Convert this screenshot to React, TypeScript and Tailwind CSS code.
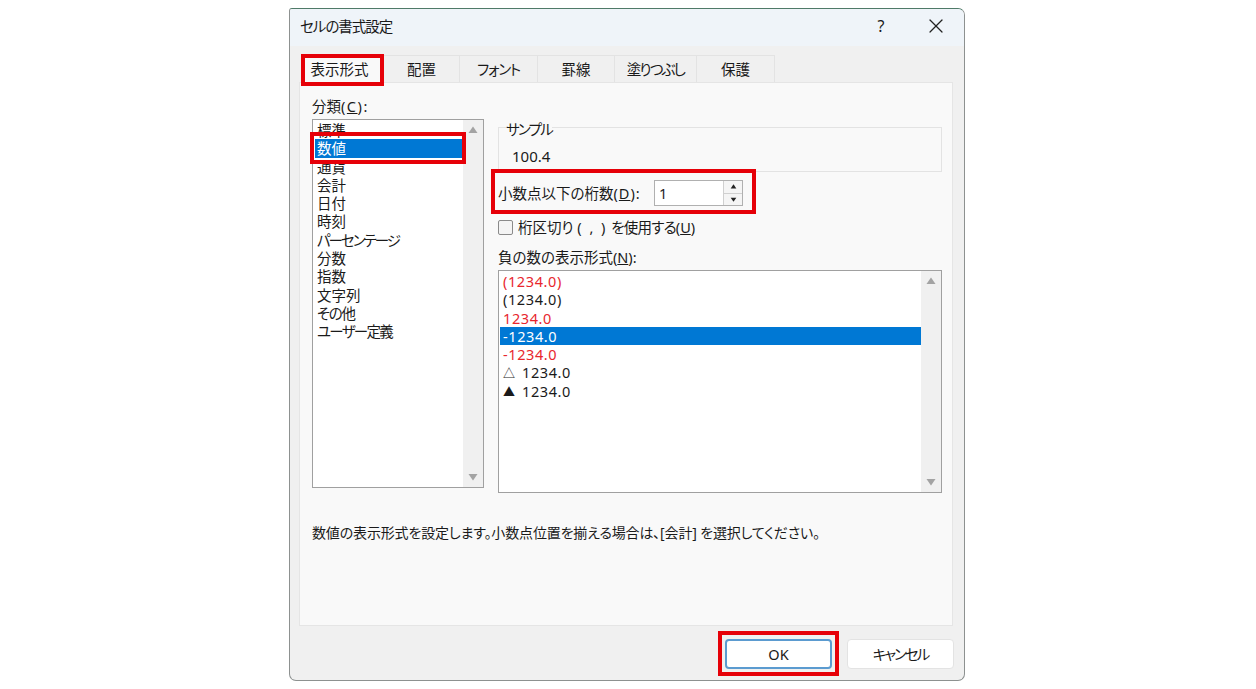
import { X } from "lucide-react";

const categories = [
  { label: "標準" },
  { label: "数値" },
  { label: "通貨" },
  { label: "会計" },
  { label: "日付" },
  { label: "時刻" },
  { label: "パーセンテージ", track: "tracking-[-2px]" },
  { label: "分数" },
  { label: "指数" },
  { label: "文字列" },
  { label: "その他", track: "tracking-[-1.3px]" },
  { label: "ユーザー定義", track: "tracking-[-1.7px]" },
];

const formats = [
  { label: "(1234.0)", color: "text-[#e8262d]" },
  { label: "(1234.0)", color: "text-[#1a1a1a]" },
  { label: "1234.0", color: "text-[#e8262d]" },
  { label: "-1234.0", color: "text-white bg-[#0078d4]" },
  { label: "-1234.0", color: "text-[#e8262d]" },
  { label: "1234.0", mark: "△", color: "text-[#1a1a1a]" },
  { label: "1234.0", mark: "▲", color: "text-[#1a1a1a]" },
];

const tabs = [
  { label: "配置", width: "w-[76px]" },
  { label: "フォント", width: "w-[78px] tracking-[-1.2px]" },
  { label: "罫線", width: "w-[77px]" },
  { label: "塗りつぶし", width: "w-[82px] tracking-[-1.8px]" },
  { label: "保護", width: "w-[78px]" },
];

const Arrow = ({ down, className }: { down?: boolean; className: string }) => (
  <svg viewBox="0 0 10 8" className={className} fill="currentColor">
    <path d={down ? "M0.5 1h9L5 7.5z" : "M0.5 7h9L5 0.5z"} />
  </svg>
);

const ScrollBar = () => (
  <div className="w-[20px] bg-[#f0f0f0] flex flex-col justify-between items-center py-[6px] text-[#a3a3a3]">
    <Arrow className="w-[10px] h-[8px]" />
    <Arrow down className="w-[10px] h-[8px]" />
  </div>
);

const RedBox = ({ className }: { className: string }) => (
  <div className={`absolute z-20 border-[4px] border-[#e60008] pointer-events-none ${className}`} />
);

const App = () => {
  return (
    <div className="w-[1256px] h-[689px] bg-white overflow-hidden pt-[8px] pl-[289px] text-[14.5px] leading-[20px] text-[#1a1a1a] [font-family:'Noto_Sans','Noto_Sans_CJK_JP',sans-serif] [font-feature-settings:'palt']">
      <div className="relative w-[676px] h-[673px] bg-[#f0f0f0] border border-[#8d9190] border-t-[#4f7a68] rounded-tl-[3px] rounded-tr-[7px] rounded-b-[7px] overflow-hidden">
        {/* title bar */}
        <div className="h-[37px] bg-[#eff4f9] flex items-center pl-[10px] pb-[3px]">
          <span className="flex-1 tracking-[-1px]">セルの書式設定</span>
          <span className="w-[20px] text-center text-[16px] mr-[33px]">?</span>
          <X size={24} strokeWidth={1.2} className="mr-[16px] text-[#222]" />
        </div>

        {/* tabs */}
        <div className="flex h-[28px] mt-[9px] pl-[14px] relative z-10">
          <div className="w-[80px] h-[28px] bg-[#f9f9f9] border border-b-0 border-[#e3e3e3] flex items-center justify-center pr-[9px] pb-[2px]">表示形式</div>
          {tabs.map((t) => (
            <div key={t.label} className={`${t.width} h-[27px] border-t border-r border-[#e3e3e3] flex items-center justify-center`}>
              {t.label}
            </div>
          ))}
        </div>

        {/* panel */}
        <div className="mx-[9px] w-[654px] h-[544px] -mt-[1px] bg-[#f9f9f9] border border-[#e5e5e5]">
          <div className="flex pl-[12px] pt-[13px] gap-[14px]">
            <div className="w-[172px]">
              <div className="h-[20px] mb-[3px]">
                分類<span className="tracking-[1.5px]">(<span className="underline">C</span>):</span>
              </div>
              <div className="h-[369px] bg-white border border-[#a0a0a0] flex overflow-hidden">
                <div className="flex-1 pt-[1px] pl-[2px] overflow-hidden">
                  {categories.map((c, i) => (
                    <div
                      key={c.label}
                      className={`h-[18.3px] leading-[18px] pl-[2px] ${c.track ?? ""} ${i === 1 ? "bg-[#0078d4] text-white" : ""}`}
                    >
                      {c.label}
                    </div>
                  ))}
                </div>
                <ScrollBar />
              </div>
            </div>

            <div className="w-[444px]">
              <fieldset className="mt-[21px] h-[55px] border border-[#e3e3e3] pl-[7px]">
                <legend className="h-[20px] px-0">
                  <span className="relative top-[2px] tracking-[-1.75px] bg-[#f9f9f9]">サンプル</span>
                </legend>
                <div className="pl-[6px] pt-[9px] text-[15px]">100.4</div>
              </fieldset>

              <div className="flex items-center h-[26px] mt-[8px]">
                <div className="w-[156px]">
                  小数点以下の桁数<span className="tracking-[1px]">(<span className="underline">D</span>):</span>
                </div>
                <div className="w-[89px] h-[26px] bg-white border border-[#b0b0b0] flex items-center justify-between pl-[4px] text-[14.5px]">
                  <span>1</span>
                  <div className="w-[19px] h-[24px] flex flex-col border-l border-[#d0d0d0] text-[#222]">
                    <div className="flex-1 flex items-center justify-center border-b border-[#d0d0d0] bg-[#f5f5f5]">
                      <Arrow className="w-[7px] h-[5px]" />
                    </div>
                    <div className="flex-1 flex items-center justify-center bg-[#f5f5f5]">
                      <Arrow down className="w-[7px] h-[5px]" />
                    </div>
                  </div>
                </div>
              </div>

              <div className="flex items-center h-[20px] mt-[11px]">
                <div className="w-[15px] h-[15px] bg-[#f4f4f4] border border-[#8a8a8a] rounded-[2px] mr-[5px]" />
                <span>
                  桁区切り <span className="tracking-[2px]">( , )</span> <span className="tracking-[-0.8px]">を使用する</span>(<span className="underline">U</span>)
                </span>
              </div>

              <div className="h-[20px] mt-[10px] mb-[3px]">
                負の数の表示形式(<span className="underline">N</span>):
              </div>
              <div className="h-[223px] bg-white border border-[#a0a0a0] flex">
                <div className="flex-1 pt-[1px] pl-[1px]">
                  {formats.map((f, i) => (
                    <div key={i} className={`h-[18.3px] leading-[18px] pl-[3px] text-[14.5px] tracking-[0.6px] ${f.color}`}>
                      {f.mark && <span className="inline-block w-[19px] text-[12px]">{f.mark}</span>}
                      {f.label}
                    </div>
                  ))}
                </div>
                <ScrollBar />
              </div>
            </div>
          </div>

          <div className="mt-[30px] pl-[12px] text-[14px] tracking-[-0.15px]">
            数値の表示形式を設定します。小数点位置を揃える場合は、[会計] を選択してください。
          </div>
        </div>

        {/* footer */}
        <div className="flex justify-end gap-[15px] pt-[13px] pr-[10px]">
          <button className="w-[107px] h-[30px] bg-white border-2 border-[#5b9bd0] rounded-[4px]">OK</button>
          <button className="w-[107px] h-[30px] bg-white border border-[#e3e3e3] rounded-[4px] tracking-[-2px]">キャンセル</button>
        </div>

        {/* red annotation boxes */}
        <RedBox className="left-[11px] top-[45px] w-[83px] h-[32px]" />
        <RedBox className="left-[20px] top-[123px] w-[156px] h-[32px]" />
        <RedBox className="left-[201px] top-[160px] w-[265px] h-[45px]" />
        <RedBox className="left-[428px] top-[622px] w-[121px] h-[45px]" />
      </div>
    </div>
  );
};

export default App;
